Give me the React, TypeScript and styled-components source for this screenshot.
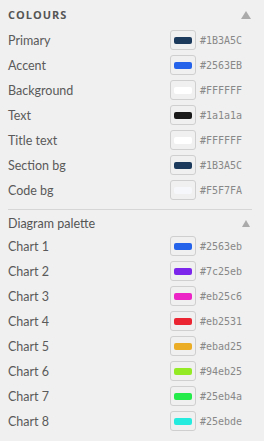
import React from 'react';
import styled, { createGlobalStyle } from 'styled-components';

const GlobalStyle = createGlobalStyle`
  html, body {
    margin: 0;
    padding: 0;
    background: #f0f0f0;
  }
`;

const Panel = styled.div`
  width: 264px;
  min-height: 441px;
  box-sizing: border-box;
  padding: 6px 12px 0 8px;
  background: #f0f0f0;
  font-family: Lato, 'Noto Sans', sans-serif;
`;

const SectionHeader = styled.div<{ $sub?: boolean }>`
  display: flex;
  align-items: center;
  justify-content: space-between;
  height: 17px;
  margin-bottom: ${(p) => (p.$sub ? '4px' : '7px')};
  color: #555;
  font-family: ${(p) => (p.$sub ? 'Lato' : "'Open Sans'")}, sans-serif;
  font-size: ${(p) => (p.$sub ? '12.5px' : '11px')};
  font-weight: ${(p) => (p.$sub ? 400 : 700)};
  letter-spacing: ${(p) => (p.$sub ? '0' : '1px')};
  text-transform: ${(p) => (p.$sub ? 'none' : 'uppercase')};
`;

const Caret = styled.span<{ $small?: boolean }>`
  width: 0;
  height: 0;
  margin-right: ${(p) => (p.$small ? '2px' : '1px')};
  border-left: ${(p) => (p.$small ? 4 : 5)}px solid transparent;
  border-right: ${(p) => (p.$small ? 4 : 5)}px solid transparent;
  border-bottom: ${(p) => (p.$small ? 7 : 8)}px solid #aaa;
`;

const Row = styled.div`
  display: flex;
  align-items: center;
  height: 20px;
  margin-bottom: 5px;
`;

const Label = styled.span`
  flex: 1;
  font-size: 12.5px;
  color: #5a5a5a;
`;

const Swatch = styled.div`
  width: 26px;
  height: 20px;
  box-sizing: border-box;
  border: 1px solid #cfcfcf;
  border-radius: 3px;
  background: #f0f0f0;
  display: flex;
  align-items: center;
  justify-content: center;
`;

const Chip = styled.div<{ $color: string }>`
  width: 18px;
  height: 7px;
  border-radius: 2px;
  background: ${(p) => p.$color};
`;

const Hex = styled.span`
  width: 52px;
  margin-left: 4px;
  font-family: 'DejaVu Sans Mono', monospace;
  font-size: 10px;
  color: #888;
`;

const Divider = styled.hr`
  border: none;
  border-top: 1px solid #d6d6d6;
  margin: 9px 0 5px;
`;

const colours = [
  ['Primary', '#1B3A5C'],
  ['Accent', '#2563EB'],
  ['Background', '#FFFFFF'],
  ['Text', '#1a1a1a'],
  ['Title text', '#FFFFFF'],
  ['Section bg', '#1B3A5C'],
  ['Code bg', '#F5F7FA'],
];

const palette = [
  '#2563eb',
  '#7c25eb',
  '#eb25c6',
  '#eb2531',
  '#ebad25',
  '#94eb25',
  '#25eb4a',
  '#25ebde',
];

const ColourRow: React.FC<{ label: string; value: string }> = ({ label, value }) => (
  <Row>
    <Label>{label}</Label>
    <Swatch>
      <Chip $color={value} />
    </Swatch>
    <Hex>{value}</Hex>
  </Row>
);

const App: React.FC = () => {
  return (
    <Panel>
      <GlobalStyle />
      <SectionHeader>
        <span>Colours</span>
        <Caret />
      </SectionHeader>
      {colours.map(([label, value]) => (
        <ColourRow key={label} label={label} value={value} />
      ))}
      <Divider />
      <SectionHeader $sub>
        <span>Diagram palette</span>
        <Caret $small />
      </SectionHeader>
      {palette.map((value, i) => (
        <ColourRow key={value} label={`Chart ${i + 1}`} value={value} />
      ))}
    </Panel>
  );
};

export default App;
